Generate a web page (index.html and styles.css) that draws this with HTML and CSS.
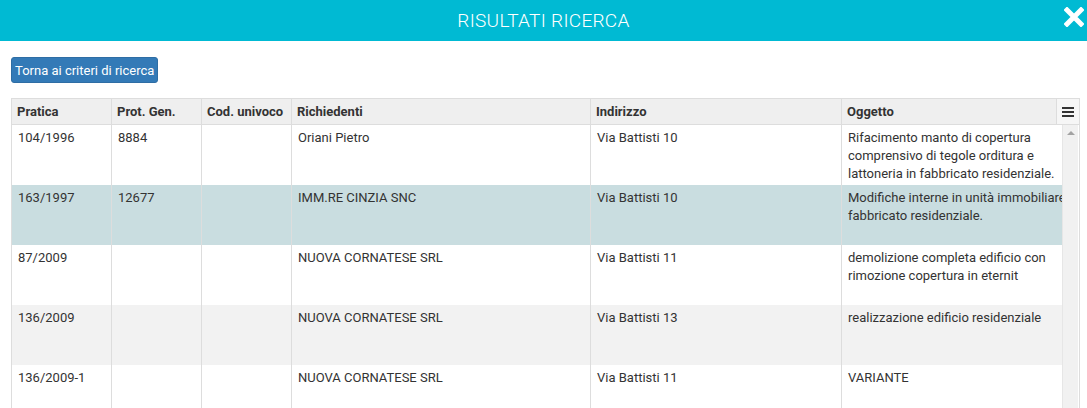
FILE: index.html
```html
<!DOCTYPE html>
<html lang="it">
<head>
    <meta charset="UTF-8">
    <title>Risultati ricerca</title>
    <link rel="stylesheet" href="styles.css">
</head>
<body>
    <div class="modal-header">
        <h1>RISULTATI RICERCA</h1>
        <span class="close">
            <svg width="20" height="20" viewBox="0 0 20 20"><path d="M3 3 L17 17 M17 3 L3 17" stroke="#fff" stroke-width="5" stroke-linecap="square"/></svg>
        </span>
    </div>

    <div class="content">
        <button class="btn">Torna ai criteri di ricerca</button>

        <!-- Griglia risultati -->
        <div class="grid">
            <div class="grid-head">
                <div class="cell">Pratica</div>
                <div class="cell">Prot. Gen.</div>
                <div class="cell">Cod. univoco</div>
                <div class="cell">Richiedenti</div>
                <div class="cell">Indirizzo</div>
                <div class="cell">Oggetto</div>
                <div class="cell menu">
                    <svg width="12" height="10" viewBox="0 0 12 10"><rect x="0" y="0" width="12" height="2" fill="#333"/><rect x="0" y="4" width="12" height="2" fill="#333"/><rect x="0" y="8" width="12" height="2" fill="#333"/></svg>
                </div>
            </div>
            <div class="grid-body">
                <div class="rows">
                    <div class="row">
                        <div class="cell">104/1996</div>
                        <div class="cell">8884</div>
                        <div class="cell"></div>
                        <div class="cell">Oriani Pietro</div>
                        <div class="cell">Via Battisti 10</div>
                        <div class="cell">Rifacimento manto di copertura comprensivo di tegole orditura e lattoneria in fabbricato residenziale.</div>
                    </div>
                    <div class="row selected">
                        <div class="cell">163/1997</div>
                        <div class="cell">12677</div>
                        <div class="cell"></div>
                        <div class="cell">IMM.RE CINZIA SNC</div>
                        <div class="cell">Via Battisti 10</div>
                        <div class="cell"><span class="nowrap">Modifiche interne in unità immobiliare</span><br>fabbricato residenziale.</div>
                    </div>
                    <div class="row">
                        <div class="cell">87/2009</div>
                        <div class="cell"></div>
                        <div class="cell"></div>
                        <div class="cell">NUOVA CORNATESE SRL</div>
                        <div class="cell">Via Battisti 11</div>
                        <div class="cell">demolizione completa edificio con rimozione copertura in eternit</div>
                    </div>
                    <div class="row alt">
                        <div class="cell">136/2009</div>
                        <div class="cell"></div>
                        <div class="cell"></div>
                        <div class="cell">NUOVA CORNATESE SRL</div>
                        <div class="cell">Via Battisti 13</div>
                        <div class="cell">realizzazione edificio residenziale</div>
                    </div>
                    <div class="row">
                        <div class="cell">136/2009-1</div>
                        <div class="cell"></div>
                        <div class="cell"></div>
                        <div class="cell">NUOVA CORNATESE SRL</div>
                        <div class="cell">Via Battisti 11</div>
                        <div class="cell">VARIANTE</div>
                    </div>
                </div>
                <div class="scrollbar">
                    <span class="arrow"></span>
                </div>
            </div>
        </div>
    </div>
</body>
</html>
```

FILE: styles.css
```css
body {
    margin: 0;
    font-family: Roboto, "Liberation Sans", Arial, sans-serif;
    font-size: 13px;
    color: #333;
    background: #fff;
    overflow: hidden;
}
.modal-header {
    position: relative;
    height: 41px;
    background-color: #00bad3;
    color: #fff;
}
.modal-header h1 {
    margin: 0;
    font-size: 19px;
    font-weight: 300;
    line-height: 41px;
    text-align: center;
    letter-spacing: 0.3px;
}
.close {
    position: absolute;
    right: 3px;
    top: 7px;
    width: 20px;
    height: 20px;
}
.content {
    padding: 16px 0 0 11px;
}
.btn {
    display: block;
    height: 26px;
    padding: 0 3px;
    font-family: inherit;
    font-size: 13px;
    color: #fff;
    background-color: #337ab7;
    border: 1px solid #2e6da4;
    border-radius: 3px;
}
.grid {
    margin-top: 15px;
    width: 1067px;
    border: 1px solid #ddd;
}
.grid-head {
    display: grid;
    grid-template-columns: 100px 90px 90px 299px 251px 215px 22px;
    height: 25px;
    background-color: #efefef;
    border-bottom: 1px solid #ddd;
    font-weight: bold;
}
.grid-head .cell {
    line-height: 25px;
    padding: 0 5px;
}
.cell {
    border-right: 1px solid #ddd;
    overflow: hidden;
}
.grid-head .menu {
    border-right: none;
    background-color: #f6f6f6;
    padding: 0;
    display: flex;
    align-items: center;
    justify-content: center;
}
.grid-body {
    display: flex;
}
.rows {
    width: 1050px;
}
.row {
    display: grid;
    grid-template-columns: 100px 90px 90px 299px 251px 220px;
    height: 60px;
}
.row .cell {
    padding: 4px 6px 0;
    line-height: 18px;
}
.row .cell:last-child {
    border-right: none;
    padding-right: 0;
}
.row.selected {
    background-color: #c9dde0;
}
.row.alt {
    background-color: #f2f2f2;
}
.nowrap {
    white-space: nowrap;
}
.scrollbar {
    width: 16px;
    background-color: #f1f1f1;
    border-left: 1px solid #e6e6e6;
    display: flex;
    justify-content: center;
    padding-top: 6px;
    box-sizing: border-box;
}
.arrow {
    width: 0;
    height: 0;
    border-left: 4px solid transparent;
    border-right: 4px solid transparent;
    border-bottom: 4px solid #a3a3a3;
}
```
